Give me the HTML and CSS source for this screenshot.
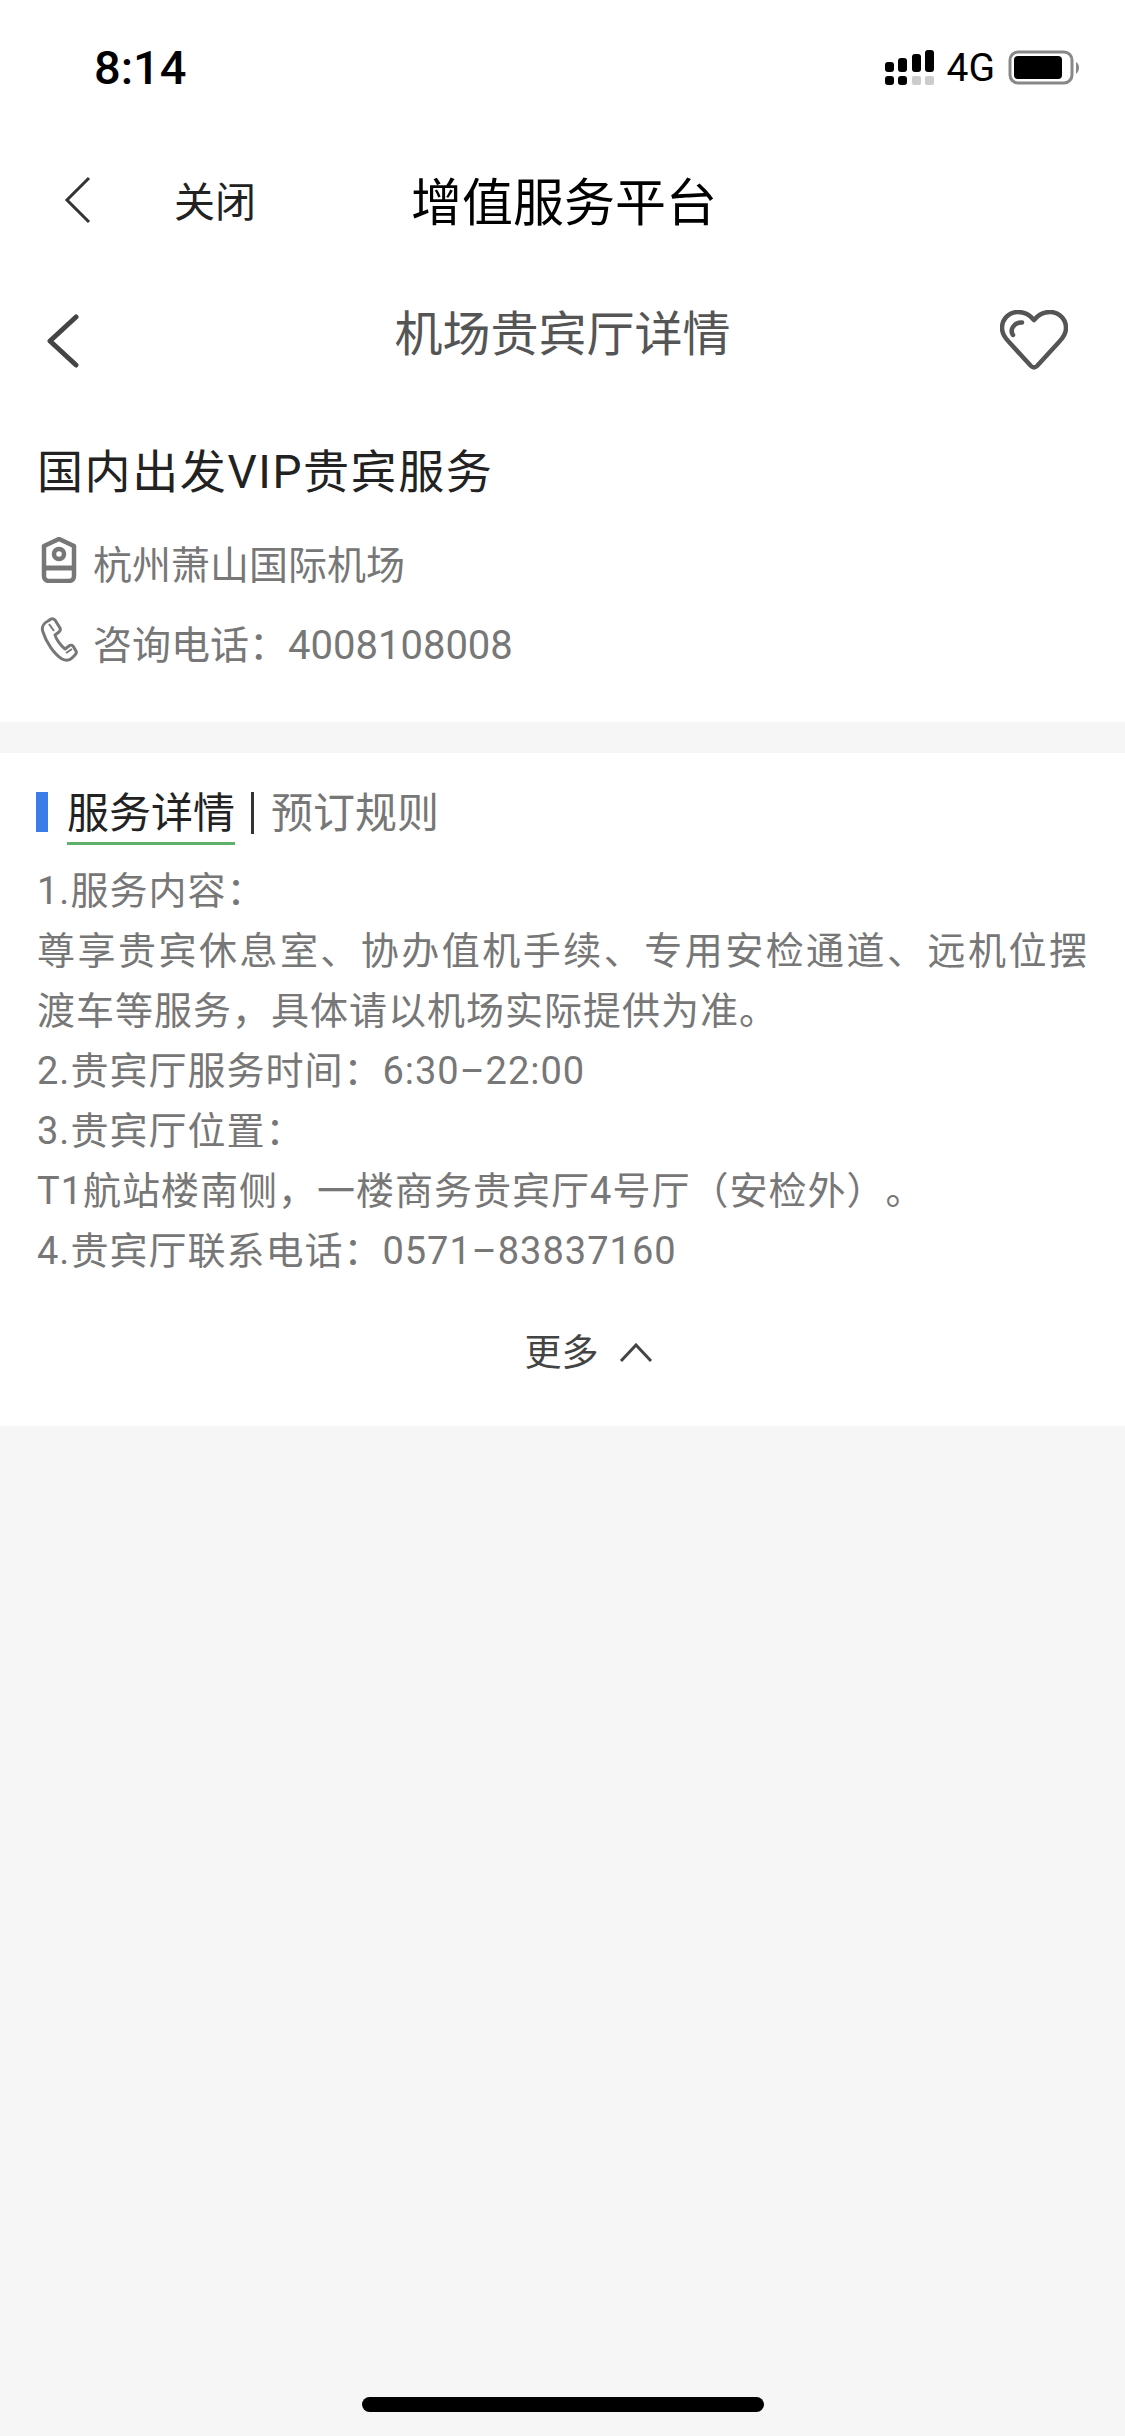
FILE: index.html
```html
<!DOCTYPE html>
<html lang="zh-CN">
<head>
    <meta charset="UTF-8">
    <meta name="viewport" content="width=device-width, initial-scale=1.0">
    <title>机场贵宾厅详情</title>
    <link rel="stylesheet" href="styles.css">
</head>
<body>
    <div class="status-bar">
        <span class="time">8:14</span>
        <div class="status-icons">
            <svg class="signal" width="49" height="36" viewBox="0 0 49 36">
                <rect x="0" y="12" width="9" height="10" rx="3" fill="#000"/>
                <rect x="13" y="8" width="9" height="14" rx="3" fill="#000"/>
                <rect x="27" y="4" width="9" height="18" rx="3" fill="#000"/>
                <rect x="40" y="0" width="9" height="22" rx="3" fill="#000"/>
                <rect x="0" y="26" width="9" height="9" rx="3" fill="#000"/>
                <rect x="13" y="26" width="9" height="9" rx="3" fill="#000"/>
                <rect x="27" y="26" width="9" height="9" rx="2" fill="#ccc"/>
                <rect x="40" y="26" width="9" height="9" rx="2" fill="#ccc"/>
            </svg>
            <span class="network">4G</span>
            <svg class="battery" width="74" height="36" viewBox="0 0 74 36">
                <rect x="2" y="2" width="62" height="31" rx="8" fill="#fff" stroke="#888" stroke-width="3"/>
                <rect x="6" y="6" width="48" height="23" rx="4" fill="#000"/>
                <path d="M68 12 C72 14 72 21 68 24 Z" fill="#888"/>
            </svg>
        </div>
    </div>

    <div class="web-nav">
        <svg class="web-back" width="30" height="48" viewBox="0 0 30 48">
            <path d="M26 2 L4 24 L26 46" fill="none" stroke="#333" stroke-width="3"/>
        </svg>
        <span class="web-close">关闭</span>
        <h1 class="web-title">增值服务平台</h1>
    </div>

    <div class="page-nav">
        <svg class="page-back" width="36" height="54" viewBox="0 0 36 54">
            <path d="M32 3 L6 27 L32 51" fill="none" stroke="#444" stroke-width="5" stroke-linecap="round" stroke-linejoin="round"/>
        </svg>
        <h2 class="page-title">机场贵宾厅详情</h2>
        <svg class="fav" width="68" height="60" viewBox="0 0 68 60">
            <path d="M34 10 C30 5 24 2 18 2 C9 2 2 9 2 18 C2 24 5 28 9 32 L31 56 C33 58 35 58 37 56 L59 32 C63 28 66 24 66 18 C66 9 59 2 50 2 C44 2 38 5 34 10 Z" fill="none" stroke="#555" stroke-width="4.5" stroke-linejoin="round"/>
            <path d="M22 12.5 C15 12 9 19 13 25" fill="none" stroke="#555" stroke-width="4.5" stroke-linecap="round"/>
        </svg>
    </div>

    <section class="info">
        <h3 class="info-title">国内出发VIP贵宾服务</h3>
        <div class="info-row">
            <svg width="38" height="46" viewBox="0 0 38 46">
                <path d="M4 9 L19 2 L34 9 V39 C34 42 32 44 29 44 H9 C6 44 4 42 4 39 Z" fill="none" stroke="#777" stroke-width="4.5" stroke-linejoin="round"/>
                <circle cx="19" cy="17" r="5" fill="none" stroke="#777" stroke-width="4.5"/>
                <path d="M4 31 H34" stroke="#777" stroke-width="5"/>
            </svg>
            <span>杭州萧山国际机场</span>
        </div>
        <div class="info-row">
            <svg width="38" height="46" viewBox="0 0 38 46">
                <path d="M3 15 C1 10 4 6 8 4 L11 2 C13 1 14 2 15 3 L20 11 C21 13 20 14 19 15 L15 18 C16 22 21 29 25 32 L29 29 C30 28 32 28 33 29 L36 34 C37 36 36 37 35 38 L32 41 C29 44 26 44 22 42 C14 37 6 25 3 15 Z" fill="none" stroke="#777" stroke-width="3" stroke-linejoin="round"/>
                <path d="M9 7 L14 14 M26 36 L32 32" fill="none" stroke="#777" stroke-width="2"/>
            </svg>
            <span>咨询电话：<span class="phone-num">4008108008</span></span>
        </div>
    </section>

    <section class="detail">
        <div class="tabs">
            <span class="tab-mark"></span>
            <span class="tab active">服务详情</span>
            <span class="tab-sep"></span>
            <span class="tab">预订规则</span>
        </div>
        <div class="detail-text">
            <p>1.服务内容：</p>
            <p>尊享贵宾休息室、协办值机手续、专用安检通道、远机位摆渡车等服务，具体请以机场实际提供为准。</p>
            <p>2.贵宾厅服务时间：6:30–22:00</p>
            <p>3.贵宾厅位置：</p>
            <p>T1航站楼南侧，一楼商务贵宾厅4号厅（安检外）。</p>
            <p>4.贵宾厅联系电话：0571–83837160</p>
        </div>
        <div class="more">
            <span>更多</span>
            <svg width="34" height="20" viewBox="0 0 34 20">
                <path d="M2 18 L17 2 L32 18" fill="none" stroke="#444" stroke-width="3"/>
            </svg>
        </div>
    </section>

    <div class="bottom">
        <div class="home-bar"></div>
    </div>
</body>
</html>
```

FILE: styles.css
```css
* {
    box-sizing: border-box;
}
html, body {
    margin: 0;
    padding: 0;
}
body {
    width: 1125px;
    height: 2436px;
    display: flex;
    flex-direction: column;
    background-color: #f6f6f6;
    font-family: Roboto, "Noto Sans CJK SC", sans-serif;
    text-spacing-trim: space-all;
    overflow: hidden;
}
h1, h2, h3, p {
    margin: 0;
    font-weight: normal;
}
svg {
    display: block;
    flex-shrink: 0;
}
.status-bar {
    height: 135px;
    background: white;
    display: flex;
    align-items: center;
    justify-content: space-between;
    padding: 0 43px 0 94px;
}
.time {
    font-size: 47px;
    font-weight: 500;
    color: #000;
}
.status-icons {
    display: flex;
    align-items: center;
    gap: 13px;
}
.network {
    font-size: 39px;
    color: #000;
}
.web-nav {
    height: 130px;
    background: white;
    display: flex;
    align-items: center;
    padding-left: 63px;
}
.web-close {
    font-size: 41px;
    color: #222;
    margin-left: 81px;
    margin-bottom: 2px;
}
.web-title {
    font-size: 51px;
    color: #000;
    margin-left: 155px;
    margin-bottom: 2px;
}
.page-nav {
    height: 135px;
    background: white;
    display: grid;
    grid-template-columns: 1fr auto 1fr;
    align-items: center;
    padding: 0 44px;
}
.page-title {
    font-size: 48px;
    color: #555;
    margin-bottom: 5px;
}
.page-back {
    margin-top: 16px;
}
.fav {
    justify-self: end;
    margin-top: 15px;
    margin-right: 13px;
}
.info {
    height: 322px;
    background: white;
    padding: 39px 37px 0;
}
.info-title {
    font-size: 46px;
    line-height: 66px;
    letter-spacing: 1.6px;
    color: #222;
    margin-bottom: 17px;
}
.info-row {
    display: flex;
    align-items: center;
    gap: 15px;
    height: 80px;
    padding-left: 3px;
    font-size: 39px;
    color: #777;
}
.info-row svg {
    margin-bottom: 4px;
}
.phone-num {
    font-size: 40px;
}
.detail {
    margin-top: 31px;
    height: 673px;
    background: white;
    padding: 36px 37px 0;
}
.tabs {
    display: flex;
    align-items: flex-start;
    height: 72px;
}
.tab-mark {
    width: 12px;
    height: 40px;
    margin-top: 3px;
    margin-left: -1px;
    margin-right: 19px;
    background-color: #3b7de8;
}
.tab {
    font-size: 42px;
    line-height: 50px;
    color: #777;
}
.tab.active {
    color: #222;
    padding-bottom: 3px;
    border-bottom: 3px solid #5fb06a;
}
.tab-sep {
    width: 3px;
    height: 42px;
    margin: 3px 17px 0 16px;
    background-color: #333;
}
.detail-text {
    font-size: 38px;
    line-height: 60px;
    letter-spacing: 1px;
    text-align: justify;
    color: #777;
}
.more {
    display: flex;
    align-items: center;
    justify-content: center;
    gap: 20px;
    height: 50px;
    margin-top: 44px;
    padding-left: 52px;
    font-size: 37px;
    color: #444;
}
.more svg {
    margin-top: 6px;
}
.bottom {
    flex: 1;
    display: flex;
    align-items: flex-end;
    justify-content: center;
    padding-bottom: 24px;
}
.home-bar {
    width: 402px;
    height: 15px;
    border-radius: 8px;
    background-color: #000;
}
```
